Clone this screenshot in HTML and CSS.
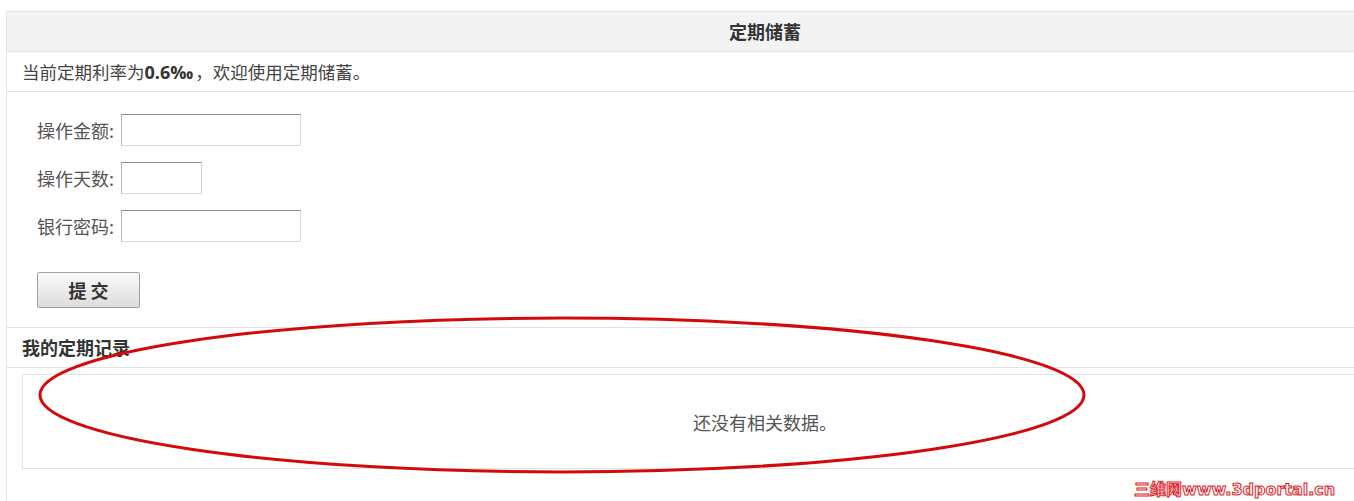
FILE: index.html
```html
<!DOCTYPE html>
<html lang="zh-CN">
<head>
    <meta charset="UTF-8">
    <title>定期储蓄</title>
    <link rel="stylesheet" href="styles.css">
</head>
<body>
    <div class="bank">
        <div class="bank-title">定期储蓄</div>

        <div class="notice">当前定期利率为<b>0.6‰</b>，欢迎使用定期储蓄。</div>

        <form class="deposit-form">
            <div class="form-row">
                <label>操作金额:</label>
                <input type="text" class="field">
            </div>
            <div class="form-row">
                <label>操作天数:</label>
                <input type="text" class="field short">
            </div>
            <div class="form-row">
                <label>银行密码:</label>
                <input type="password" class="field">
            </div>
            <button type="button" class="submit-btn">提 交</button>
        </form>

        <div class="section-title">我的定期记录</div>

        <div class="records">
            <p class="empty">还没有相关数据。</p>
        </div>
    </div>

    <!-- annotation drawn over the page -->
    <svg class="mark" width="1354" height="501" viewBox="0 0 1354 501">
        <ellipse cx="562" cy="395" rx="522" ry="77" fill="none" stroke="#d20a0a" stroke-width="3"/>
    </svg>

    <div class="watermark">三维网www.3dportal.cn</div>
</body>
</html>
```

FILE: styles.css
```css
body {
    margin: 0;
    overflow: hidden;
    height: 501px;
    font-family: "Noto Sans CJK SC", "Noto Sans", sans-serif;
    font-size: 18px;
    color: #444;
    background: #fff;
}

.bank {
    margin: 11px 0 0 6px;
    width: 1516px;
    min-height: 520px;
    border-left: 1px solid #e3e3e3;
    border-top: 1px solid #e3e3e3;
}

.bank-title {
    height: 39px;
    line-height: 39px;
    background-color: #f3f3f3;
    border-bottom: 1px solid #e3e3e3;
    text-align: center;
    font-size: 18px;
    font-weight: bold;
    color: #333;
}

.notice {
    height: 39px;
    line-height: 39px;
    padding-left: 15px;
    border-bottom: 1px solid #e3e3e3;
    font-size: 17.5px;
    color: #444;
}

.notice b {
    font-family: "Open Sans", sans-serif;
    font-size: 18px;
    color: #333;
    margin-right: 2px;
}

.deposit-form {
    padding: 21px 0 19px 30px;
    border-bottom: 1px solid #e3e3e3;
}

.form-row {
    display: flex;
    align-items: center;
    margin-bottom: 14px;
}

.form-row label {
    width: 84px;
    line-height: 34px;
    color: #555;
}

.field {
    width: 174px;
    height: 30px;
    padding: 0 2px;
    margin: 0;
    border: 1px solid #d6d6d6;
    border-top-color: #8e8e8e;
    border-left-color: #b8b8b8;
    background: #fff;
    outline: none;
}

.field.short {
    width: 75px;
}

.submit-btn {
    display: block;
    margin-top: 29px;
    width: 103px;
    height: 36px;
    border: 1px solid #a0a0a0;
    border-radius: 2px;
    background: linear-gradient(#fbfbfb, #dcdcdc);
    font-family: "Noto Sans CJK SC", sans-serif;
    font-size: 18px;
    font-weight: bold;
    color: #333;
    cursor: pointer;
}

.section-title {
    height: 39px;
    line-height: 39px;
    padding-left: 15px;
    border-bottom: 1px solid #e3e3e3;
    font-size: 18px;
    font-weight: bold;
    color: #333;
}

.records {
    margin: 6px 15px 0 15px;
    height: 93px;
    border: 1px solid #e3e3e3;
    display: flex;
    align-items: center;
    justify-content: center;
}

.empty {
    margin: 0;
    color: #555;
}

.mark {
    position: absolute;
    left: 0;
    top: 0;
    pointer-events: none;
}

.watermark {
    position: absolute;
    left: 1134px;
    top: 476px;
    font-family: "DejaVu Sans", "Noto Sans CJK SC", sans-serif;
    font-size: 16px;
    font-weight: bold;
    color: #fff;
    -webkit-text-stroke: 1px #e0191e;
}
```
